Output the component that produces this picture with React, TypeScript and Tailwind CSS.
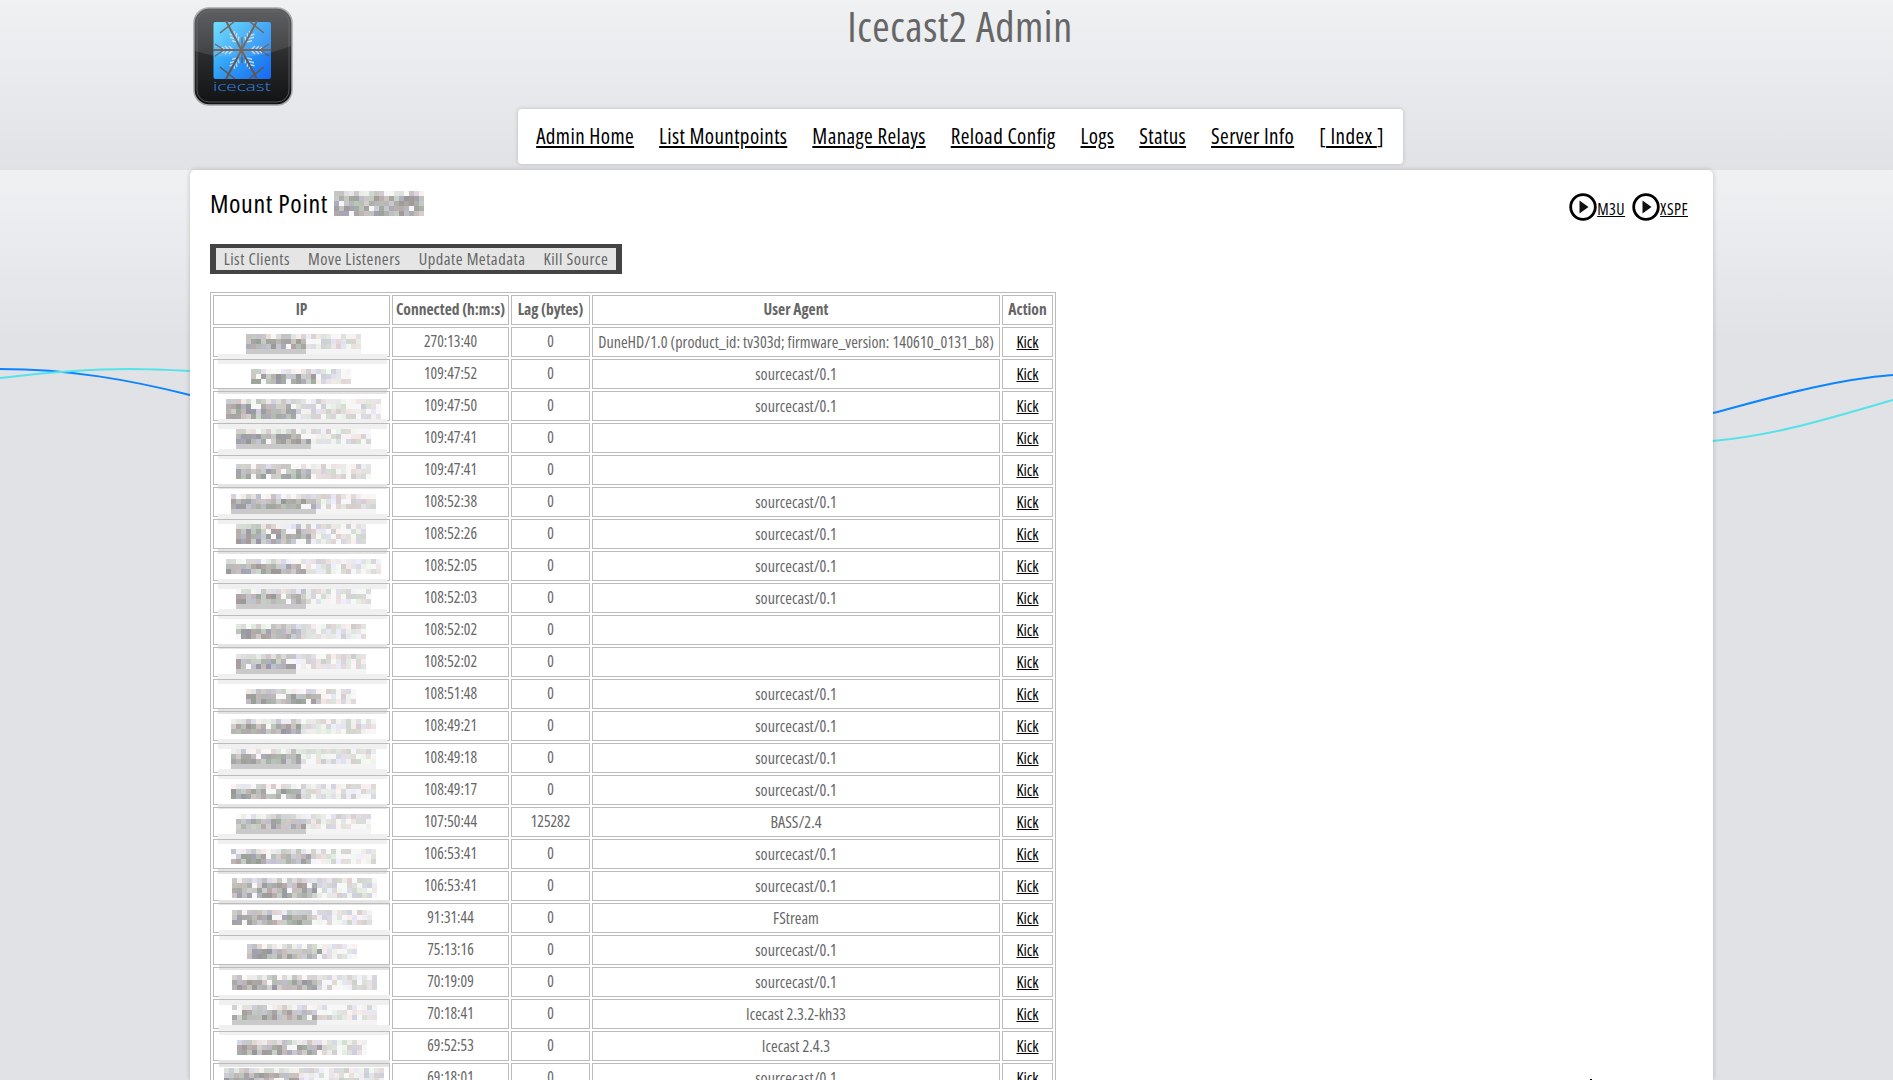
const clients = [
  { at: '270:13:40', lag: '0', agent: 'DuneHD/1.0 (product_id: tv303d; firmware_version: 140610_0131_b8)' },
  { at: '109:47:52', lag: '0', agent: 'sourcecast/0.1' },
  { at: '109:47:50', lag: '0', agent: 'sourcecast/0.1' },
  { at: '109:47:41', lag: '0', agent: '' },
  { at: '109:47:41', lag: '0', agent: '' },
  { at: '108:52:38', lag: '0', agent: 'sourcecast/0.1' },
  { at: '108:52:26', lag: '0', agent: 'sourcecast/0.1' },
  { at: '108:52:05', lag: '0', agent: 'sourcecast/0.1' },
  { at: '108:52:03', lag: '0', agent: 'sourcecast/0.1' },
  { at: '108:52:02', lag: '0', agent: '' },
  { at: '108:52:02', lag: '0', agent: '' },
  { at: '108:51:48', lag: '0', agent: 'sourcecast/0.1' },
  { at: '108:49:21', lag: '0', agent: 'sourcecast/0.1' },
  { at: '108:49:18', lag: '0', agent: 'sourcecast/0.1' },
  { at: '108:49:17', lag: '0', agent: 'sourcecast/0.1' },
  { at: '107:50:44', lag: '125282', agent: 'BASS/2.4' },
  { at: '106:53:41', lag: '0', agent: 'sourcecast/0.1' },
  { at: '106:53:41', lag: '0', agent: 'sourcecast/0.1' },
  { at: '91:31:44', lag: '0', agent: 'FStream' },
  { at: '75:13:16', lag: '0', agent: 'sourcecast/0.1' },
  { at: '70:19:09', lag: '0', agent: 'sourcecast/0.1' },
  { at: '70:18:41', lag: '0', agent: 'Icecast 2.3.2-kh33' },
  { at: '69:52:53', lag: '0', agent: 'Icecast 2.4.3' },
  { at: '69:18:01', lag: '0', agent: 'sourcecast/0.1' },
]

// pixelated IP blocks: start, split, end (page x), y offset and rows in the cell, then the smear band below
const smears = [
  [245, 305, 360, 6, 4, 26, 10], [250, 315, 350, 9, 3, 29, 5], [225, 295, 380, 7, 4, 27, 10], [235, 310, 370, 5, 4, 25, 10],
  [235, 310, 370, 8, 3, 28, 5], [230, 315, 375, 6, 4, 26, 10], [235, 310, 365, 4, 4, 29, 5], [225, 305, 380, 7, 3, 27, 10],
  [235, 305, 370, 5, 4, 25, 10], [235, 300, 365, 8, 3, 28, 5], [235, 295, 365, 6, 4, 26, 10], [245, 320, 355, 9, 3, 29, 5],
  [230, 300, 375, 7, 3, 27, 10], [230, 300, 375, 5, 4, 25, 10], [230, 300, 375, 8, 3, 28, 5], [235, 305, 370, 6, 4, 26, 10],
  [230, 310, 375, 9, 3, 29, 5], [231, 316, 376, 6, 4, 28, 5], [231, 311, 371, 6, 3, 26, 10], [246, 321, 356, 8, 3, 29, 5],
  [231, 316, 376, 7, 3, 27, 10], [231, 316, 376, 5, 4, 25, 10], [236, 321, 366, 8, 3, 28, 7], [223, 298, 383, 4, 4, 0, 0],
]
const flatBottom = [0, 3, 5, 8, 10, 13, 15, 21]

function makeRandom(seed: number) {
  let s = seed
  return () => {
    s = (s * 16807) % 2147483647
    return s / 2147483647
  }
}

function blockColor(r: () => number, dark: boolean, topRow: boolean) {
  const base = dark ? (topRow ? 190 : 150) + r() * 55 : 205 + r() * 38
  const tint = r()
  const a = Math.round(base + (tint < 0.3 ? 10 : 0))
  const b = Math.round(base + (tint > 0.7 ? 8 : 0))
  const c = Math.round(base + (tint > 0.3 && tint < 0.5 ? 14 : 0))
  return `rgb(${Math.min(a, 255)},${Math.min(b, 255)},${Math.min(c, 255)})`
}

function Mosaic({ x, split, end, y, rows, seed, flat }: { x: number; split: number; end: number; y: number; rows: number; seed: number; flat?: boolean }) {
  const r = makeRandom(seed * 7919 + 11)
  const blocks = []
  for (let row = 0; row < rows; row++) {
    for (let bx = x; bx < end; bx += 5) {
      const dark = bx < split
      const last = row === rows - 1
      let fill = blockColor(r, dark, row === 0)
      if (flat && last) fill = dark ? '#c9c9c9' : '#f4f4f4'
      else if (r() < (dark ? 0.06 : 0.16)) fill = '#f7f7f7'
      blocks.push(<rect key={row + '-' + bx} x={bx} y={y + row * 5} width={5} height={5} fill={fill} />)
    }
  }
  return <>{blocks}</>
}

function IpSmear({ index }: { index: number }) {
  const [x, split, end, y, rows, bandTop, bandH] = smears[index]
  const late = index >= 17
  return (
    <svg className="absolute left-0 top-0 overflow-visible" width={177} height={30} viewBox="213 0 177 30">
      <Mosaic x={x} split={split} end={end} y={y} rows={rows} seed={index + 1} flat={flatBottom.includes(index)} />
      {bandH > 0 && (
        <rect x={late ? 218 : 217} y={bandTop} width={late ? 171 : 169} height={bandH} fill={bandH === 10 ? '#f0f0f0' : '#e4e4e4'} />
      )}
    </svg>
  )
}

function PlayIcon() {
  return (
    <svg width="28" height="28" viewBox="0 0 28 28">
      <circle cx="14" cy="14" r="12.3" fill="none" stroke="#000" strokeWidth="2.8" />
      <path d="M10.5 7.5 L19.5 14 L10.5 20.5 Z" fill="#111" />
    </svg>
  )
}

function Logo() {
  const arms = [0, 60, 120, 180, 240, 300]
  return (
    <svg className="absolute left-[193px] top-[7px]" width="100" height="100" viewBox="0 0 100 100">
      <defs>
        <linearGradient id="shell" x1="0" y1="0" x2="0" y2="1">
          <stop offset="0" stopColor="#4a4c4f" />
          <stop offset="0.5" stopColor="#2a2b2d" />
          <stop offset="1" stopColor="#111213" />
        </linearGradient>
        <linearGradient id="ice" x1="0" y1="0" x2="1" y2="1">
          <stop offset="0" stopColor="#5fdcff" />
          <stop offset="0.5" stopColor="#2f9df5" />
          <stop offset="1" stopColor="#1668f0" />
        </linearGradient>
      </defs>
      <rect x="1" y="1" width="98" height="97" rx="15" fill="url(#shell)" stroke="#a5a7a9" strokeWidth="1.5" />
      <rect x="4" y="4" width="92" height="91" rx="12" fill="none" stroke="#555" strokeWidth="1" />
      <rect x="20.5" y="15" width="57.5" height="57" rx="2" fill="url(#ice)" />
      <g transform="translate(49 43)">
        {arms.map(a => (
          <g key={a} transform={`rotate(${a + 30})`} stroke="#b9dcf6" fill="none">
            <path d="M-4 -13 L0 -9 L4 -13 M-4 -17 L0 -13 L4 -17 M-3 -20 L0 -17 L3 -20" strokeWidth="1.4" />
          </g>
        ))}
      </g>
      <g stroke="#66534a" strokeWidth="2" fill="none">
        <path d="M33 14 L64 72 M64 14 L33 72 M20 43 L78 43" />
        <path d="M49 43 L49 30 M49 43 L49 56" strokeWidth="1.2" />
        <path d="M27 26 L42 14 M56 14 L71 26 M27 60 L42 72 M56 72 L71 60" strokeWidth="1.6" />
        <path d="M22 37 L31 43 L22 49 M76 37 L67 43 L76 49" strokeWidth="1.2" />
      </g>
      <path d="M2 44 C30 53 66 52 98 39 L98 15 Q98 2 85 2 L15 2 Q2 2 2 15 Z" fill="#fff" opacity="0.11" />
      <text x="49" y="84" textAnchor="middle" className="font-stretch-normal font-light" fontSize="13.5" fill="#2f86e8" textLength="58" lengthAdjust="spacingAndGlyphs">icecast</text>
    </svg>
  )
}

const navLinks = ['Admin Home', 'List Mountpoints', 'Manage Relays', 'Reload Config', 'Logs', 'Status', 'Server Info']
const subLinks = ['List Clients', 'Move Listeners', 'Update Metadata', 'Kill Source']
const cell = 'h-[30px] border border-[#bbb] p-0 text-center align-middle text-[#666]'

export default function App() {
  return (
    <div className="relative h-screen overflow-hidden bg-[#e0e2e6] font-['Open_Sans',sans-serif] font-stretch-condensed">
      <header className="relative flex h-[170px] flex-col items-center bg-[linear-gradient(#f0f1f3,#e0e2e6)] pl-[27px]">
        <Logo />
        <h1 className="h-[52px] text-[42px] font-normal leading-[52px] tracking-[0.6px] text-[#666]">Icecast2 Admin</h1>
        <nav className="mt-[57px] flex h-[55px] w-[885px] items-center justify-center gap-[25px] rounded-[4px] bg-white text-[21px] tracking-[0.4px] text-black shadow-[0_0_4px_rgba(0,0,0,0.18)]">
          {navLinks.map(l => <a key={l} className="underline" href="#">{l}</a>)}
          <span>[<a className="underline" href="#"> Index </a>]</span>
        </nav>
      </header>

      <main className="relative h-[910px] bg-[linear-gradient(#f0f1f3,#e0e2e6_170px)]">
        {/* Background waves */}
        <svg className="absolute left-0 top-[-170px]" width="1893" height="1080" viewBox="0 0 1893 1080" fill="none" strokeWidth="2">
          <path d="M0 369 C70 369 130 380 190 395" stroke="#0a84ff" />
          <path d="M1713 413 C1770 398 1830 380 1893 375" stroke="#0a84ff" />
          <path d="M0 378 C50 372 100 369 130 369 C150 369 170 370 190 371" stroke="#55e3ea" />
          <path d="M1713 441 C1780 435 1840 415 1893 400" stroke="#55e3ea" />
        </svg>

        <section className="relative ml-[190px] h-full w-[1523px] rounded-t-[5px] bg-white pl-5 pr-[25px] pt-[20px] shadow-[0_0_5px_rgba(0,0,0,0.2)]">
          <div className="flex h-[34px] items-start justify-between">
            <h2 className="flex items-center text-[26px] leading-[26px] tracking-[0.6px] text-black">
              Mount Point
              <svg className="ml-[6px]" width="90" height="25" viewBox="334 193 90 25">
                <Mosaic x={334} split={424} end={424} y={193} rows={5} seed={99} />
              </svg>
            </h2>
            <div className="mt-[3px] flex items-center text-[16px] tracking-[0.5px] text-black">
              <PlayIcon />
              <a className="mt-1 underline" href="#">M3U</a>
              <span className="ml-[7px]"><PlayIcon /></span>
              <a className="mt-1 underline" href="#">XSPF</a>
            </div>
          </div>

          <ul className="mt-5 flex h-[30px] w-[412px] items-center justify-center gap-[18px] border-x-[6px] border-y-4 border-[#444] bg-[#e5e5e5] text-[16.5px] tracking-[0.5px] text-[#666]">
            {subLinks.map(l => <li key={l}>{l}</li>)}
          </ul>

          <table className="mt-[18px] table-fixed border-separate border-spacing-[2px] border border-[#bbb]">
            <colgroup>
              <col className="w-[177px]" />
              <col className="w-[117px]" />
              <col className="w-[79px]" />
              <col className="w-[408px]" />
              <col className="w-[51px]" />
            </colgroup>
            <thead>
              <tr>
                {['IP', 'Connected (h:m:s)', 'Lag (bytes)', 'User Agent', 'Action'].map(h => (
                  <th key={h} className={cell + ' text-[15.5px] font-bold'}>{h}</th>
                ))}
              </tr>
            </thead>
            <tbody>
              {clients.map((c, i) => (
                <tr key={i}>
                  <td className={cell + ' relative'}><IpSmear index={i} /></td>
                  <td className={cell + ' text-[15.5px]'}>{c.at}</td>
                  <td className={cell + ' text-[15.5px]'}>{c.lag}</td>
                  <td className={cell + ' text-[16px] tracking-[0.05px]'}>{c.agent}</td>
                  <td className={cell + ' text-[16px] !text-black'}><a className="underline" href="#">Kick</a></td>
                </tr>
              ))}
            </tbody>
          </table>
        </section>
      </main>
      <div className="absolute left-[1590px] top-[1079px] h-px w-[2px] bg-black" />
    </div>
  )
}
